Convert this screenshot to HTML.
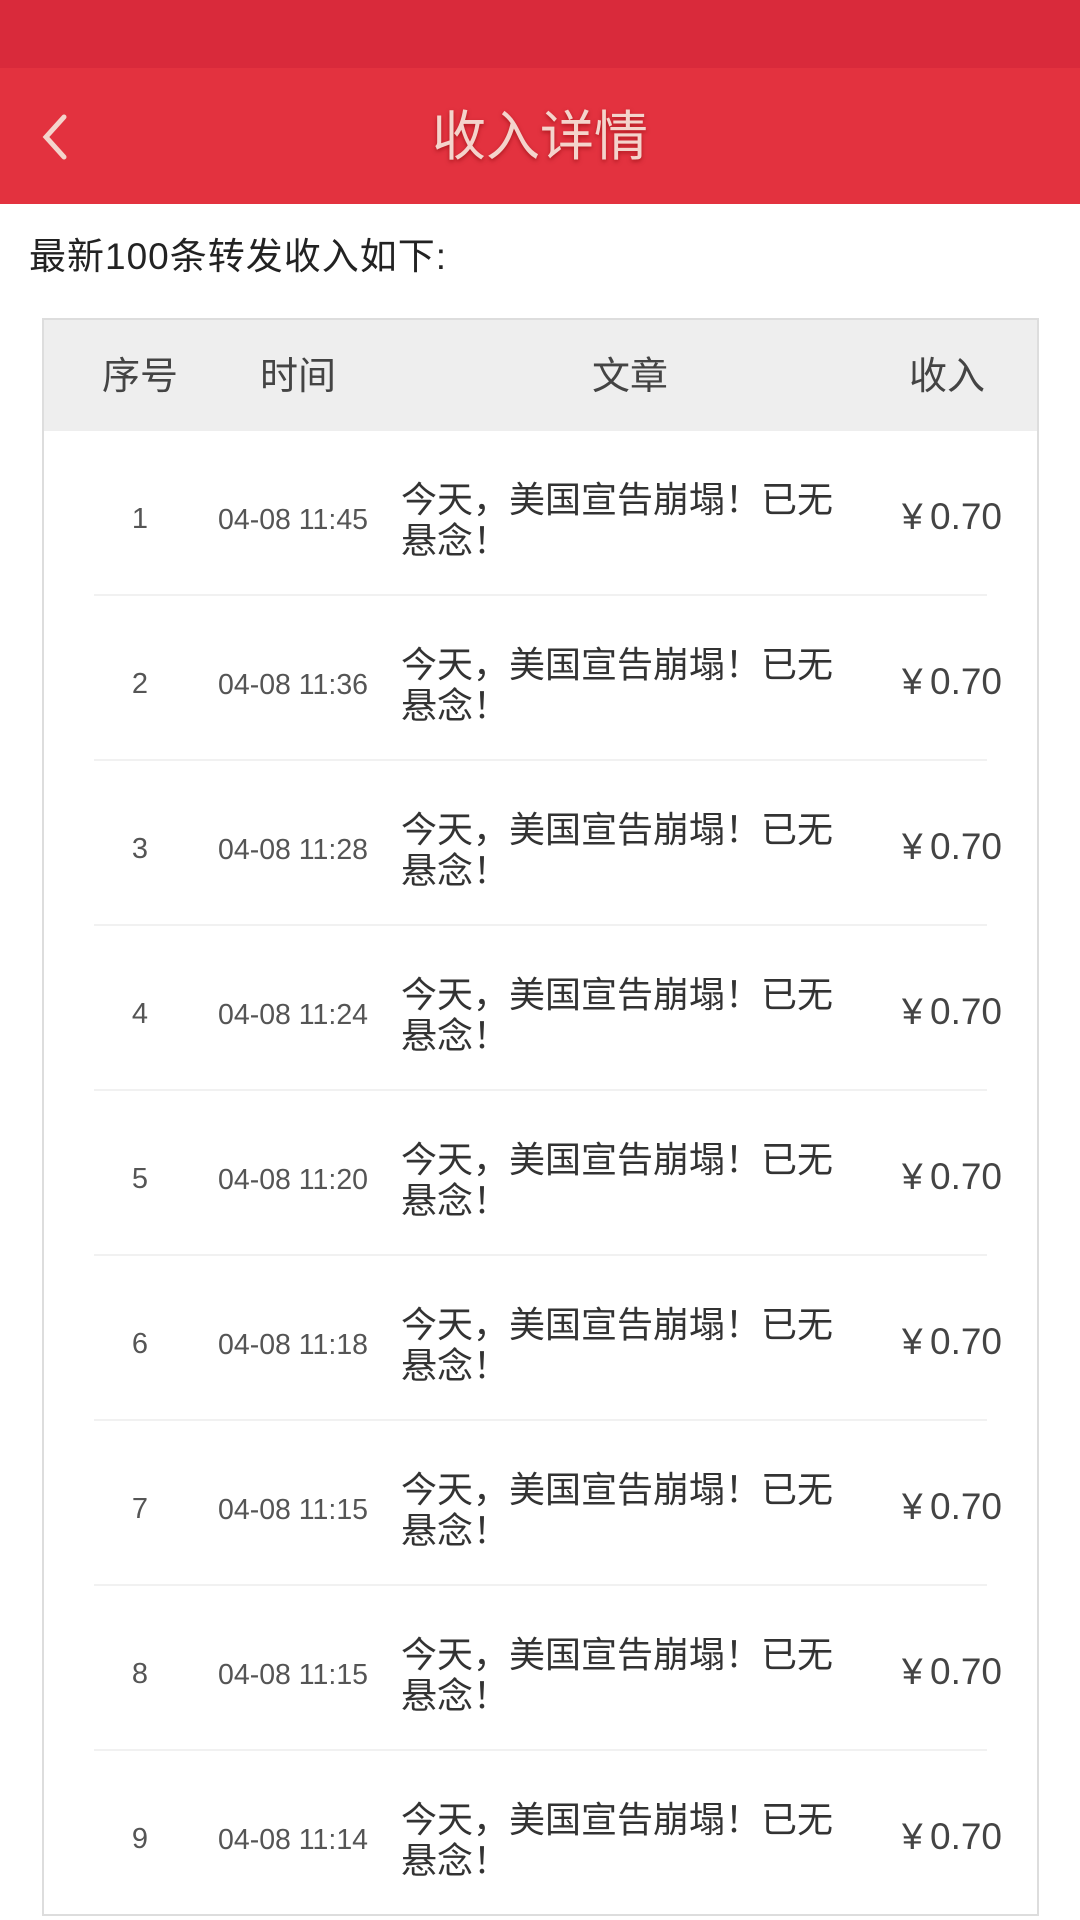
<!DOCTYPE html>
<html><head><meta charset="utf-8"><style>
*{margin:0;padding:0;box-sizing:border-box}
body{width:1080px;height:1920px;background:#fff;position:relative;overflow:hidden;font-family:"Liberation Sans","Noto Sans CJK SC",sans-serif;color:#333}
.sb{position:absolute;left:0;top:0;width:1080px;height:68px;background:#d92a3b}
.hd{position:absolute;left:0;top:68px;width:1080px;height:136px;background:#e3323f}
.title{position:absolute;left:0;top:100px;width:1080px;text-align:center;font-size:54px;color:#f4d4cc;line-height:74px;text-shadow:0 2px 4px rgba(120,0,0,.5)}
.sub{position:absolute;left:29px;top:232px;font-size:37px;letter-spacing:1px;color:#222;line-height:50px}
.tbl{position:absolute;left:42px;top:318px;width:997px;height:1598px;border:2px solid #ddd;background:#fff}
.th{position:absolute;left:0;top:0;width:993px;height:111px;background:#eeeeee}
.c{position:absolute;white-space:nowrap;transform:translateX(-50%)}
.h{font-size:38px;color:#444;top:32px;line-height:50px}
.row{position:absolute;left:0;width:993px;height:165px}
.sep{position:absolute;left:50px;right:50px;bottom:0;height:2px;background:#f1f1f1}
.idx{position:absolute;left:96px;width:0;top:68px;font-size:29px;color:#555;line-height:40px}
.tm{position:absolute;left:174px;top:69px;font-size:28.5px;color:#555;line-height:40px}
.art{position:absolute;left:357px;top:48px;width:450px;font-size:36px;line-height:41px;color:#333}
.amt{position:absolute;left:858px;top:63px;font-size:37px;color:#444;line-height:46px}
</style></head><body>
<div class="sb"></div>
<div class="hd"></div>
<svg style="position:absolute;left:38px;top:112px" width="34" height="50" viewBox="0 0 34 50"><path d="M26 5 L8 25 L26 45" stroke="#f4d4cc" stroke-width="5" fill="none" stroke-linecap="round"/></svg>
<div class="title">收入详情</div>
<div class="sub">最新100条转发收入如下:</div>
<div class="tbl">
<div class="th">
<div class="c h" style="left:96px">序号</div>
<div class="c h" style="left:254px">时间</div>
<div class="c h" style="left:586px">文章</div>
<div class="c h" style="left:903px">收入</div>
</div>
<div id="rows"></div>
</div>
<script>
var t=["11:45","11:36","11:28","11:24","11:20","11:18","11:15","11:15","11:14"];
var h="";
for(var i=0;i<9;i++){
h+='<div class="row" style="top:'+(111+i*165)+'px"><div class="idx"><span class="c" style="left:0">'+(i+1)+'</span></div><div class="tm">04-08 '+t[i]+'</div><div class="art">今天，美国宣告崩塌！已无悬念！</div><div class="amt">¥&thinsp;0.70</div>'+(i<8?'<div class="sep"></div>':'')+'</div>';
}
document.getElementById("rows").innerHTML=h;
</script>
</body></html>
